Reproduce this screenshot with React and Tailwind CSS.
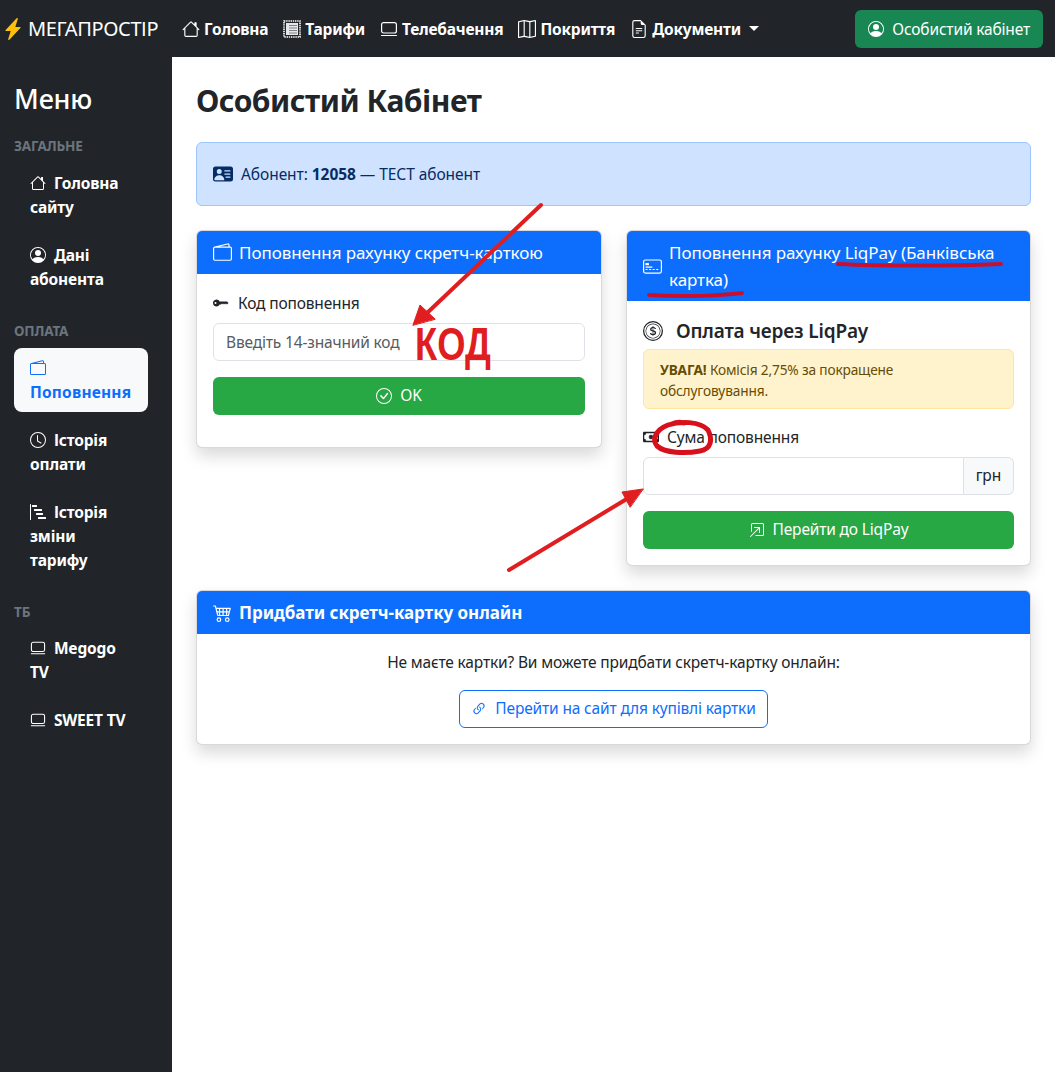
import {
  BsLightningChargeFill, BsHouse, BsMap, BsFileEarmarkText, BsPersonCircle,
  BsWallet2, BsClock, BsBarChartSteps, BsKeyFill, BsCheckCircle, BsCreditCard2Front, BsCoin,
  BsCash, BsBoxArrowInUpRight, BsLink45Deg, BsCart4, BsPersonVcardFill,
} from "react-icons/bs";

function StampIcon({ className }) {
  return (
    <svg className={className} viewBox="0 0 18 18" fill="none">
      <rect x="1" y="1" width="16" height="16" stroke="#fff" strokeWidth="1.6" strokeDasharray="1.4 0.8" />
      <rect x="3" y="3" width="12" height="12" fill="#e4e6e8" />
      <path d="M6 5.5h8M6 8h8M6 10.5h8M6 13h8" stroke="#7d8287" />
    </svg>
  );
}

function TvIcon({ className }) {
  return (
    <svg className={className} viewBox="0 0 18 18" fill="none" stroke="currentColor" strokeWidth="1.2" strokeLinecap="round">
      <rect x="1.6" y="2.6" width="14.8" height="10.4" rx="2" />
      <path d="M1.5 15.5h15" />
    </svg>
  );
}

const topNav = [
  { label: "Головна", icon: BsHouse },
  { label: "Тарифи", icon: StampIcon },
  { label: "Телебачення", icon: TvIcon },
  { label: "Покриття", icon: BsMap },
  { label: "Документи", icon: BsFileEarmarkText, caret: true },
];

function SideItem({ icon: Icon, children, active }) {
  return (
    <a className={`mb-2 block rounded-lg px-4 py-2 font-bold leading-6 ${active ? "bg-[#f8f9fa] tracking-[0.2px] text-[#0d6efd]" : "text-white"}`}>
      <Icon className="mr-1 inline-block h-4 w-4 align-[-2px]" /> {children}
    </a>
  );
}

function SideHeading({ className = "", children }) {
  return <p className={`pt-[2px] text-[13.5px] font-bold uppercase leading-[19px] text-[#6c757d] ${className}`}>{children}</p>;
}

function Sidebar() {
  return (
    <aside className="w-[172px] shrink-0 bg-[#212529] pl-[14px] pr-6 pt-6">
      <h2 className="mb-[18px] text-[27px] font-medium leading-[36px] text-white">Меню</h2>
      <SideHeading className="mb-[7px]">Загальне</SideHeading>
      <SideItem icon={BsHouse}>Головна сайту</SideItem>
      <SideItem icon={BsPersonCircle}>Дані абонента</SideItem>
      <SideHeading className="mb-[7px] mt-[21px]">Оплата</SideHeading>
      <SideItem active icon={BsWallet2}>Поповнення</SideItem>
      <SideItem icon={BsClock}>Історія оплати</SideItem>
      <SideItem icon={BsBarChartSteps}>Історія зміни тарифу</SideItem>
      <SideHeading className="mb-[6px] mt-[21px]">ТБ</SideHeading>
      <SideItem icon={TvIcon}>Megogo TV</SideItem>
      <SideItem icon={TvIcon}>SWEET TV</SideItem>
    </aside>
  );
}

function Card({ className = "", title, icon: Icon, bold, children }) {
  return (
    <section className={`overflow-hidden rounded-md border border-black/15 bg-white shadow-[0_8px_16px_rgba(0,0,0,0.15)] ${className}`}>
      <header className={`flex items-center gap-[7px] bg-[#0d6efd] px-4 py-2 text-white ${bold ? "font-bold" : ""}`}>
        <Icon className="h-[19px] w-[19px] shrink-0" />
        <span className="text-[17px] leading-[27px] tracking-[-0.06px]">{title}</span>
      </header>
      {children}
    </section>
  );
}

function Annotations() {
  return (
    <>
      <svg className="pointer-events-none absolute left-0 top-0" width="1058" height="1072" fill="none" stroke="#e01e20" strokeLinecap="round">
        <path d="M541 205 426 314" strokeWidth="4" />
        <path d="M413 325 420 305 435 319Z" fill="#e01e20" strokeWidth="1" />
        <path d="M509 570 630 497" strokeWidth="4" />
        <path d="M643 489 622 492 630 507Z" fill="#e01e20" strokeWidth="1" />
        <path d="M838 264C880 266 950 266 1001 264" stroke="#c8102e" strokeWidth="4" />
        <path d="M649 295C680 297 720 296 742 293" stroke="#c8102e" strokeWidth="4" />
        <path d="M668 425C680 421 700 421 708 430 713 440 711 449 700 451 685 454 665 453 657 446 652 440 655 430 668 425M672 424Q678 421 684 423" stroke="#d8101c" strokeWidth="5" />
      </svg>
      <span className="pointer-events-none absolute left-[415px] top-[318px] origin-left scale-x-[0.79] text-[46px] font-bold leading-[52px] tracking-normal text-[#e01e20] [font-family:'Liberation_Sans',sans-serif]">КОД</span>
    </>
  );
}

export default function App() {
  return (
    <div className="relative flex min-h-[1072px] flex-col bg-white pr-[3px] text-[15.5px] tracking-[-0.16px] text-[#212529] [font-family:'Noto_Sans',sans-serif]">
      <nav className="flex h-[57px] items-center bg-[#212529] pl-[2px] pr-3 text-white">
        <BsLightningChargeFill className="h-[22px] w-[22px] text-[#ffc107]" />
        <span className="ml-1 mr-6 text-[20px] tracking-[-0.4px]">МЕГАПРОСТІР</span>
        <div className="flex items-center gap-[15px]">
          {topNav.map(({ label, icon: Icon, caret }) => (
            <a key={label} className="flex items-center gap-1 font-bold tracking-[-0.2px]">
              <Icon className="h-[18px] w-[18px]" /> <span className="pt-[2px]">{label}</span>
              {caret && <span className="ml-1 h-0 w-0 border-x-[5px] border-t-[5px] border-x-transparent border-t-white" />}
            </a>
          ))}
        </div>
        <button className="ml-auto flex h-[38px] items-center gap-2 rounded-md bg-[#198754] px-[13px] text-white">
          <BsPersonCircle className="h-4 w-4" /> <span className="pt-[2px]">Особистий кабінет</span>
        </button>
      </nav>

      <div className="flex flex-1">
        <Sidebar />
        <main className="min-w-0 flex-1 px-6 pt-[25px]">
          <h1 className="mb-[22px] text-[30px] font-bold leading-[38px] tracking-[-0.5px]">Особистий Кабінет</h1>
          <div className="mb-6 flex h-16 items-center gap-2 rounded-md border border-[#9ec5fe] bg-[#cfe2ff] px-4 text-[#052c65]">
            <BsPersonVcardFill className="h-5 w-5" />
            <span className="pt-[2px] tracking-[-0.06px]">Абонент: <b>12058</b> — ТЕСТ абонент</span>
          </div>

          <div className="flex items-start gap-6">
            <Card className="w-[406px]" icon={BsWallet2} title="Поповнення рахунку скретч-карткою">
              <div className="px-4 pb-8 pt-[17px]">
                <label className="mb-2 flex items-center gap-[9px] leading-6"><BsKeyFill className="h-4 w-4" /> Код поповнення</label>
                <input className="h-[38px] w-full rounded-md border border-[#dee2e6] px-3 placeholder:text-[#595c5f]" placeholder="Введіть 14-значний код" />
                <button className="mt-4 flex h-[38px] w-full items-center justify-center gap-2 rounded-md bg-[#28a745] text-white">
                  <BsCheckCircle className="h-4 w-4" /> OK
                </button>
              </div>
            </Card>

            <Card className="min-w-0 flex-1" icon={BsCreditCard2Front} title="Поповнення рахунку LiqPay (Банківська картка)">
              <div className="p-4">
                <h3 className="mb-1 flex items-center gap-[13px] text-[19px] font-semibold leading-7"><BsCoin className="h-5 w-5" /> Оплата через LiqPay</h3>
                <div className="mb-4 rounded-md border border-[#ffe69c] bg-[#fff3cd] px-4 pb-[7px] pt-[9px] text-[13.7px] leading-[21px] text-[#664d03]">
                  <b>УВАГА!</b> Комісія 2,75% за покращене обслуговування.
                </div>
                <label className="mb-2 flex items-center gap-2 leading-6"><BsCash className="h-4 w-4 stroke-current stroke-[0.5]" /> Сума поповнення</label>
                <div className="flex h-[38px]">
                  <input className="min-w-0 flex-1 rounded-l-md border border-[#dee2e6] px-3" />
                  <span className="flex items-center rounded-r-md border border-l-0 border-[#dee2e6] bg-[#f8f9fa] px-3">грн</span>
                </div>
                <button className="mt-4 flex h-[38px] w-full items-center justify-center gap-2 rounded-md bg-[#28a745] text-white">
                  <BsBoxArrowInUpRight className="h-4 w-4" /> Перейти до LiqPay
                </button>
              </div>
            </Card>
          </div>

          <Card className="mt-6" bold icon={BsCart4} title="Придбати скретч-картку онлайн">
            <div className="p-4 text-center">
              <p className="mb-4 leading-6">Не маєте картки? Ви можете придбати скретч-картку онлайн:</p>
              <a className="inline-flex h-[38px] items-center gap-2 rounded-md border border-[#0d6efd] px-[11px] align-top text-[#0d6efd]">
                <BsLink45Deg className="h-4 w-4" /> Перейти на сайт для купівлі картки
              </a>
            </div>
          </Card>
        </main>
      </div>
      <Annotations />
    </div>
  );
}
